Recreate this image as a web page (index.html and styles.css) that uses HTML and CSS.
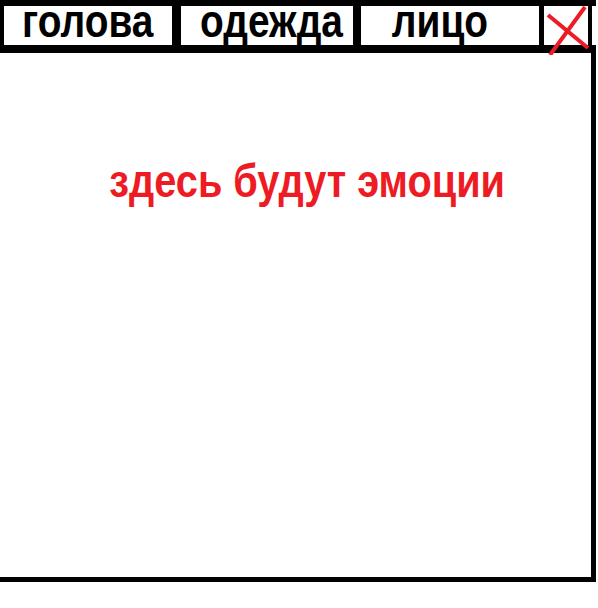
FILE: index.html
```html
<!DOCTYPE html>
<html lang="ru">
<head>
<meta charset="utf-8">
<link rel="stylesheet" href="styles.css">
</head>
<body>
<div class="page">
  <div class="tabs">
    <div class="tab tab-head"><span class="tab-label">голова</span></div>
    <div class="tab tab-clothes"><span class="tab-label">одежда</span></div>
    <div class="tab tab-face"><span class="tab-label">лицо</span></div>
    <div class="tab tab-close">
      <svg class="close-icon" width="48" height="52" viewBox="0 0 48 52">
        <line x1="6" y1="52" x2="41" y2="4" stroke="#ed1c24" stroke-width="4"/>
        <line x1="4" y1="12" x2="44" y2="45" stroke="#ed1c24" stroke-width="4"/>
      </svg>
    </div>
  </div>
  <div class="content">
    <div class="message">здесь будут эмоции</div>
  </div>
</div>
</body>
</html>
```

FILE: styles.css
```css
html, body {
  margin: 0;
  padding: 0;
  background: #ffffff;
}

.page {
  width: 598px;
  height: 608px;
  font-family: "Liberation Sans", Arial, sans-serif;
}

.tabs {
  display: flex;
  width: 592px;
  height: 39px;
  border-top: 6px solid #000;
  border-bottom: 8px solid #000;
  border-left: 4px solid #000;
  box-sizing: content-box;
}

.tab {
  display: flex;
  align-items: flex-start;
  justify-content: center;
  box-sizing: border-box;
  height: 39px;
  flex-shrink: 0;
}

.tab-label {
  display: inline-block;
  flex-shrink: 0;
  white-space: nowrap;
  font-weight: bold;
  font-size: 46px;
  line-height: 30px;
  color: #000;
  transform: scaleX(0.845);
}

.tab-head {
  width: 177px;
  border-right: 9px solid #000;
}

.tab-clothes {
  width: 180px;
  border-right: 8px solid #000;
  padding-left: 10px;
}

.tab-face {
  width: 183px;
  border-right: 5px solid #000;
  padding-right: 20px;
}

.tab-close {
  width: 48px;
  border-right: 4px solid #000;
  position: relative;
}

.close-icon {
  position: absolute;
  left: 0;
  top: -3px;
}

.content {
  width: 596px;
  height: 529px;
  box-sizing: border-box;
  border-right: 5px solid #000;
  border-bottom: 5px solid #000;
  display: flex;
  justify-content: center;
  align-items: flex-start;
}

.message {
  flex-shrink: 0;
  white-space: nowrap;
  margin-top: 104px;
  margin-left: 24px;
  color: #ed1c24;
  font-weight: bold;
  font-size: 47px;
  line-height: 1;
  transform: scaleX(0.845);
}
```
